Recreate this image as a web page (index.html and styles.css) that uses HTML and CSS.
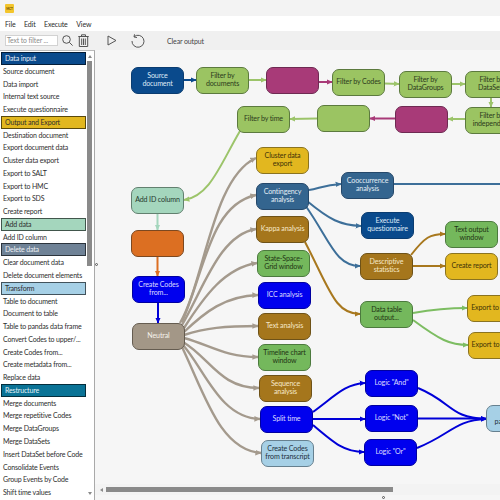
FILE: index.html
```html
<!DOCTYPE html>
<html lang="en">
<head>
<meta charset="utf-8">
<title>MCT</title>
<link rel="stylesheet" href="styles.css">
</head>
<body>
<div class="app">
  <div class="titlebar"><span class="appicon">MCT</span></div>
  <div class="menubar"><span>File</span><span>Edit</span><span>Execute</span><span>View</span></div>
  <div class="work">
    <aside class="side">
      <div class="filter">
        <span class="input">Text to filter ...</span>
        <svg class="ic" width="11" height="11" viewBox="0 0 11 11"><circle cx="4.500" cy="4.500" r="3.800"/><path d="M7.300 7.300l3.300 3.300"/></svg>
        <svg class="ic trash" width="11" height="13" viewBox="0 0 11 13"><path d="M.3 2.500h10.400M3.500 2.500V.8h4v1.700M1.300 2.500v10h8.400v-10M3.700 4.500v6.500M5.500 4.500v6.500M7.300 4.500v6.500"/></svg>
      </div>
      <div class="listwrap">
        <ul class="list">
          <li class="h blue">Data input</li><li>Source document</li><li>Data import</li><li>Internal text source</li><li>Execute questionnaire</li>
          <li class="h gold">Output and Export</li><li>Destination document</li><li>Export document data</li><li>Cluster data export</li><li>Export to SALT</li><li>Export to HMC</li><li>Export to SDS</li><li>Create report</li>
          <li class="h mint">Add data</li><li>Add ID column</li>
          <li class="h slate">Delete data</li><li>Clear document data</li><li>Delete document elements</li>
          <li class="h sky">Transform</li><li>Table to document</li><li>Document to table</li><li>Table to pandas data frame</li><li>Convert Codes to upper/...</li><li>Create Codes from...</li><li>Create metadata from...</li><li>Replace data</li>
          <li class="h teal">Restructure</li><li>Merge documents</li><li>Merge repetitive Codes</li><li>Merge DataGroups</li><li>Merge DataSets</li><li>Insert DataSet before Code</li><li>Consolidate Events</li><li>Group Events by Code</li><li>Shift time values</li>
        </ul>
        <div class="vbar"><i class="up"></i><b></b><i class="down"></i></div>
      </div>
    </aside>
    <main class="right">
      <div class="toolbar">
        <svg class="tool" width="10" height="11" viewBox="0 0 10 11"><path d="M1 1L9 5.500 1 10z"/></svg>
        <svg class="tool reset" width="14" height="14" viewBox="0 0 14 14"><path d="M3.200 2.600A6 6 0 1 1 1 7M3.500 .3L3 3l3 .5"/></svg>
        <span class="clear">Clear output</span>
      </div>
      <div class="canvas">
        <div class="diagram">
          <svg class="edges" width="640" height="500" viewBox="0 0 640 500">
            <defs>
              <marker id="a-navy" viewBox="0 0 4 4" markerWidth="3" markerHeight="3" refX="3.600" refY="2" orient="auto"><path d="M0 .2L4 2 0 3.800z" fill="#0a4a8c"/></marker>
              <marker id="a-leaf" viewBox="0 0 4 4" markerWidth="3" markerHeight="3" refX="3.600" refY="2" orient="auto"><path d="M0 .2L4 2 0 3.800z" fill="#9cc46a"/></marker>
              <marker id="a-mag" viewBox="0 0 4 4" markerWidth="3" markerHeight="3" refX="3.600" refY="2" orient="auto"><path d="M0 .2L4 2 0 3.800z" fill="#a83a78"/></marker>
              <marker id="a-mint" viewBox="0 0 4 4" markerWidth="3" markerHeight="3" refX="3.600" refY="2" orient="auto"><path d="M0 .2L4 2 0 3.800z" fill="#a4d6bd"/></marker>
              <marker id="a-org" viewBox="0 0 4 4" markerWidth="3" markerHeight="3" refX="3.600" refY="2" orient="auto"><path d="M0 .2L4 2 0 3.800z" fill="#dc6f22"/></marker>
              <marker id="a-blue" viewBox="0 0 4 4" markerWidth="3" markerHeight="3" refX="3.600" refY="2" orient="auto"><path d="M0 .2L4 2 0 3.800z" fill="#0000d8"/></marker>
              <marker id="a-tau" viewBox="0 0 4 4" markerWidth="2.600" markerHeight="2.600" refX="3.600" refY="2" orient="auto"><path d="M0 .2L4 2 0 3.800z" fill="#a49a8d"/></marker>
              <marker id="a-steel" viewBox="0 0 4 4" markerWidth="3" markerHeight="3" refX="3.600" refY="2" orient="auto"><path d="M0 .2L4 2 0 3.800z" fill="#3d6f99"/></marker>
              <marker id="a-brn" viewBox="0 0 4 4" markerWidth="3" markerHeight="3" refX="3.600" refY="2" orient="auto"><path d="M0 .2L4 2 0 3.800z" fill="#a8781e"/></marker>
              <marker id="a-grn" viewBox="0 0 4 4" markerWidth="3" markerHeight="3" refX="3.600" refY="2" orient="auto"><path d="M0 .2L4 2 0 3.800z" fill="#7dbd62"/></marker>
            </defs>
            <g class="e navy"><path d="M184 80H196" marker-end="url(#a-navy)"/></g>
            <g class="e leaf">
              <path d="M249 80H266" marker-end="url(#a-leaf)"/>
              <path d="M385 83.500L399 84" marker-end="url(#a-leaf)"/>
              <path d="M452 84H465" marker-end="url(#a-leaf)"/>
              <path d="M491 97V107" marker-end="url(#a-leaf)"/>
              <path d="M465 119H448" marker-end="url(#a-leaf)"/>
              <path d="M317 118.500L290 119" marker-end="url(#a-leaf)"/>
              <path d="M240 131C220 165 210 196 184 200" marker-end="url(#a-leaf)"/>
            </g>
            <g class="e mag">
              <path d="M318 82H332" marker-end="url(#a-mag)"/>
              <path d="M395 118.500H370" marker-end="url(#a-mag)"/>
            </g>
            <g class="e mint"><path d="M157.500 213V230" marker-end="url(#a-mint)"/></g>
            <g class="e org"><path d="M157.500 256V276" marker-end="url(#a-org)"/></g>
            <g class="e blue">
              <path d="M158 302V323" marker-end="url(#a-blue)"/>
              <path d="M313 412C335 396 345 384 365 383" marker-end="url(#a-blue)"/>
              <path d="M313 419H365" marker-end="url(#a-blue)"/>
              <path d="M313 425C335 444 345 452 364 452" marker-end="url(#a-blue)"/>
              <path d="M418 388C452 402 450 418 486 419" marker-end="url(#a-blue)"/>
              <path d="M418 418.500H486" marker-end="url(#a-blue)"/>
              <path d="M417 448C450 435 455 420 486 419" marker-end="url(#a-blue)"/>
            </g>
            <g class="e tau">
              <path d="M180 323C205 280 212 178 256 158" marker-end="url(#a-tau)"/>
              <path d="M182 322C205 270 210 205 256 195" marker-end="url(#a-tau)"/>
              <path d="M182 325C205 285 220 235 256 229" marker-end="url(#a-tau)"/>
              <path d="M184 328C205 295 225 268 257 263" marker-end="url(#a-tau)"/>
              <path d="M184 332C205 312 225 296 258 295" marker-end="url(#a-tau)"/>
              <path d="M184 335C205 328 225 326 258 326" marker-end="url(#a-tau)"/>
              <path d="M184 338C210 345 225 357 258 357" marker-end="url(#a-tau)"/>
              <path d="M183 342C210 358 220 388 259 388" marker-end="url(#a-tau)"/>
              <path d="M183 345C205 370 220 418 260 419" marker-end="url(#a-tau)"/>
              <path d="M182 347C205 395 220 450 261 453" marker-end="url(#a-tau)"/>
            </g>
            <g class="e steel">
              <path d="M309 190C320 188 325 185 341 184" marker-end="url(#a-steel)"/>
              <path d="M394 184H640"/>
              <path d="M307 201C330 220 340 225 361 226" marker-end="url(#a-steel)"/>
              <path d="M305 205C330 240 335 266 360 266" marker-end="url(#a-steel)"/>
            </g>
            <g class="e brn">
              <path d="M305 242C330 290 335 314 360 314" marker-end="url(#a-brn)"/>
              <path d="M411 255C425 237 430 234 445 234" marker-end="url(#a-brn)"/>
              <path d="M413 266H445" marker-end="url(#a-brn)"/>
            </g>
            <g class="e grn">
              <path d="M413 313C430 310 445 308 467 308" marker-end="url(#a-grn)"/>
              <path d="M413 320C440 340 450 345 468 345" marker-end="url(#a-grn)"/>
            </g>
          </svg>
          <div class="n navyn p1">Source<br>document</div>
          <div class="n leafn p2">Filter by<br>documents</div>
          <div class="n magn p3"></div>
          <div class="n leafn p4">Filter by Codes</div>
          <div class="n leafn p5">Filter by<br>DataGroups</div>
          <div class="n leafn p6">Filter by<br>DataSets</div>
          <div class="n leafn p7">Filter by<br>independent</div>
          <div class="n magn p8"></div>
          <div class="n leafn p9"></div>
          <div class="n leafn p10">Filter by time</div>
          <div class="n goldn p11">Cluster data<br>export</div>
          <div class="n steeln p12">Contingency<br>analysis</div>
          <div class="n brnn p13">Kappa analysis</div>
          <div class="n grnn p14">State-Space-<br>Grid window</div>
          <div class="n bluen p15">ICC analysis</div>
          <div class="n brnn p16">Text analysis</div>
          <div class="n grnn p17">Timeline chart<br>window</div>
          <div class="n brnn p18">Sequence<br>analysis</div>
          <div class="n bluen p19">Split time</div>
          <div class="n skyn p20">Create Codes<br>from transcript</div>
          <div class="n mintn p21">Add ID column</div>
          <div class="n orgn p22"></div>
          <div class="n bluen p23">Create Codes<br>from...</div>
          <div class="n taun p24">Neutral</div>
          <div class="n steeln p25">Cooccurrence<br>analysis</div>
          <div class="n navyn p26">Execute<br>questionnaire</div>
          <div class="n brnn p27">Descriptive<br>statistics</div>
          <div class="n grnn p28">Data table<br>output...</div>
          <div class="n grnn p29">Text output<br>window</div>
          <div class="n goldn p30">Create report</div>
          <div class="n goldn p31">Export to SALT</div>
          <div class="n goldn p32">Export to HMC</div>
          <div class="n bluen p33">Logic "And"</div>
          <div class="n bluen p34">Logic "Not"</div>
          <div class="n bluen p35">Logic "Or"</div>
          <div class="n skyn p36">Create<br>pandas data</div>
        </div>
      </div>
      <div class="hbar"><i class="left"></i><b></b></div>
      <div class="grip bottom"></div>
    </main>
    <div class="grip middle"></div>
  </div>
</div>
</body>
</html>
```
FILE: styles.css
```css
* { box-sizing: border-box; }
html, body { margin: 0; padding: 0; }
body { width: 500px; height: 500px; overflow: hidden; background: #f3f3f3; font-family: "Lato", "Open Sans", sans-serif; color: #2b2b2b; }
.app { width: 500px; height: 500px; display: flex; flex-direction: column; position: relative; overflow: hidden; }
.titlebar { height: 16px; background: #f3f3f3; display: flex; align-items: center; padding-left: 5px; flex: none; }
.appicon { width: 9px; height: 9px; background: #f3c52c; border-radius: 1px; font-size: 3px; font-weight: 700; line-height: 11px; text-align: center; color: #5a4300; overflow: hidden; }
.menubar { height: 15px; background: #fff; display: flex; align-items: center; gap: 8.500px; padding-left: 5px; font-size: 7px; letter-spacing: -.12px; flex: none; }
.work { flex: 1; display: flex; min-height: 0; position: relative; }
.side { width: 95px; flex: none; display: flex; flex-direction: column; }
.filter { height: 19px; display: flex; align-items: center; padding-left: 5px; background: #f0f0f0; flex: none; }
.input { width: 53px; height: 11px; background: #fff; border: 1px solid #d2d2d2; font-size: 6.800px; letter-spacing: -.1px; line-height: 9px; color: #8c8c8c; padding-left: 1px; white-space: nowrap; overflow: hidden; }
.ic { fill: none; stroke: #555; stroke-width: 1; margin-left: 4px; }
.trash { margin-left: 5px; }
.listwrap { flex: 1; display: flex; background: #fff; border-top: 1px solid #bbb; border-right: 1px solid #a9a9a9; padding-left: 1px; min-height: 0; }
.list { list-style: none; margin: 0; padding: 1px 0 0; width: 85px; flex: none; }
.list li { height: 12.770px; font-size: 7px; letter-spacing: -.16px; line-height: 12.500px; padding-left: 2px; white-space: nowrap; overflow: hidden; color: #2e2e2e; }
.list .h { border: 1px solid rgba(0, 0, 0, .6); line-height: 10.500px; padding-left: 3px; }
.blue { background: #0a4a8c; color: #e8eef8 !important; }
.gold { background: #e2b71f; }
.mint { background: #a4d6bd; }
.slate { background: #6f8296; color: #eef1f4 !important; }
.sky { background: #a6d0e6; }
.teal { background: #0a7396; color: #e6f2f6 !important; }
.vbar { width: 5px; margin-left: 1px; flex: none; display: flex; flex-direction: column; align-items: center; position: relative; }
.vbar b { display: block; width: 5px; height: 205px; background: #8a8a8a; margin-top: 3px; }
.vbar i { display: block; width: 0; height: 0; border-left: 2.500px solid transparent; border-right: 2.500px solid transparent; }
.vbar .up { border-bottom: 3px solid #8a8a8a; margin-top: 4px; }
.vbar .down { border-top: 3px solid #8a8a8a; margin-top: auto; margin-bottom: 5px; }
.right { flex: 1; min-width: 0; display: flex; flex-direction: column; background: #f6f6f6; position: relative; }
.toolbar { height: 19px; background: #f0f0f0; display: flex; align-items: center; padding-left: 12px; flex: none; font-size: 7px; letter-spacing: -.12px; }
.tool { fill: none; stroke: #555; stroke-width: 1; }
.reset { margin-left: 14px; }
.clear { margin-left: 22px; color: #444; }
.canvas { flex: 1; position: relative; overflow: hidden; min-height: 0; }
.diagram { position: absolute; left: -95px; top: -50px; width: 640px; height: 500px; }
.edges { position: absolute; left: 0; top: 0; }
.e path { fill: none; stroke-width: 2; stroke-linecap: butt; }
.e.tau path { stroke-width: 2.400; }
.navy path { stroke: #0a4a8c; }
.leaf path { stroke: #9cc46a; }
.mag path { stroke: #a83a78; }
.mint path { stroke: #a4d6bd; }
.org path { stroke: #dc6f22; }
.blue path { stroke: #0000d8; }
.tau path { stroke: #a49a8d; }
.steel path { stroke: #3d6f99; }
.brn path { stroke: #a8781e; }
.grn path { stroke: #7dbd62; }
.e.blue, .e.mint { background: none; }
.n { position: absolute; width: 53px; height: 26.500px; border-radius: 7px; border: 1px solid #4a4a3a; font-size: 7.100px; letter-spacing: -.14px; line-height: 8.600px; display: flex; align-items: center; justify-content: center; text-align: center; white-space: nowrap; }
.navyn { background: #0a4a8c; color: #dfe9f6; border-color: #0a3c70; }
.leafn { background: #9bc462; color: #2c3a1c; border-color: #5c7a3e; }
.magn { background: #a83a78; border-color: #6e2a52; }
.goldn { background: #e2b71f; color: #3f3208; border-color: #8a7320; }
.steeln { background: #34658f; color: #e3edf5; border-color: #25486a; }
.brnn { background: #a5761c; color: #f5e8c8; border-color: #6e5218; }
.grnn { background: #74b85c; color: #1f3514; border-color: #4c7a3e; }
.bluen { background: #0000ee; color: #dcdcff; border-color: #0000a0; }
.skyn { background: #a6d0e6; color: #1f3040; border-color: #66808f; }
.mintn { background: #a4d6bd; color: #24382e; border-color: #62806f; }
.orgn { background: #dc6f22; border-color: #7c4820; }
.taun { background: #a39787; color: #f5f1ea; border-color: #655c50; }
.p1 { left: 131px; top: 67px; }
.p2 { left: 196px; top: 67px; }
.p3 { left: 266px; top: 67px; }
.p4 { left: 332px; top: 69px; }
.p5 { left: 399px; top: 71px; }
.p6 { left: 465px; top: 71px; }
.p7 { left: 465px; top: 107px; }
.p8 { left: 395px; top: 106px; }
.p9 { left: 317px; top: 105px; }
.p10 { left: 237px; top: 106px; }
.p11 { left: 256px; top: 147px; }
.p12 { left: 256px; top: 183px; }
.p13 { left: 256px; top: 216px; }
.p14 { left: 257px; top: 250px; }
.p15 { left: 258px; top: 282px; }
.p16 { left: 258px; top: 313px; }
.p17 { left: 258px; top: 344px; }
.p18 { left: 259px; top: 375px; }
.p19 { left: 260px; top: 406px; }
.p20 { left: 261px; top: 440px; }
.p21 { left: 131px; top: 187px; }
.p22 { left: 131px; top: 230px; }
.p23 { left: 132px; top: 276px; }
.p24 { left: 132px; top: 323px; }
.p25 { left: 341px; top: 172px; }
.p26 { left: 361px; top: 212px; }
.p27 { left: 360px; top: 253px; }
.p28 { left: 360px; top: 301px; }
.p29 { left: 445px; top: 221px; }
.p30 { left: 445px; top: 253px; }
.p31 { left: 467px; top: 295px; }
.p32 { left: 468px; top: 332px; }
.p33 { left: 365px; top: 370px; }
.p34 { left: 365px; top: 405px; }
.p35 { left: 364px; top: 439px; }
.p36 { left: 486px; top: 405px; }
.hbar { height: 11px; flex: none; background: #f3f3f3; display: flex; align-items: center; padding-left: 5px; position: absolute; left: 0; right: 0; bottom: 5px; }
.hbar i { display: block; width: 0; height: 0; border-top: 2.500px solid transparent; border-bottom: 2.500px solid transparent; border-right: 3px solid #8a8a8a; }
.hbar b { display: block; height: 5px; width: 287px; background: #8a8a8a; margin-left: 3px; }
.grip { position: absolute; width: 3px; height: 3px; border: 1px solid #555; border-radius: 50%; }
.bottom { left: 287px; bottom: 1px; }
.middle { left: 95px; top: 232px; }
```
